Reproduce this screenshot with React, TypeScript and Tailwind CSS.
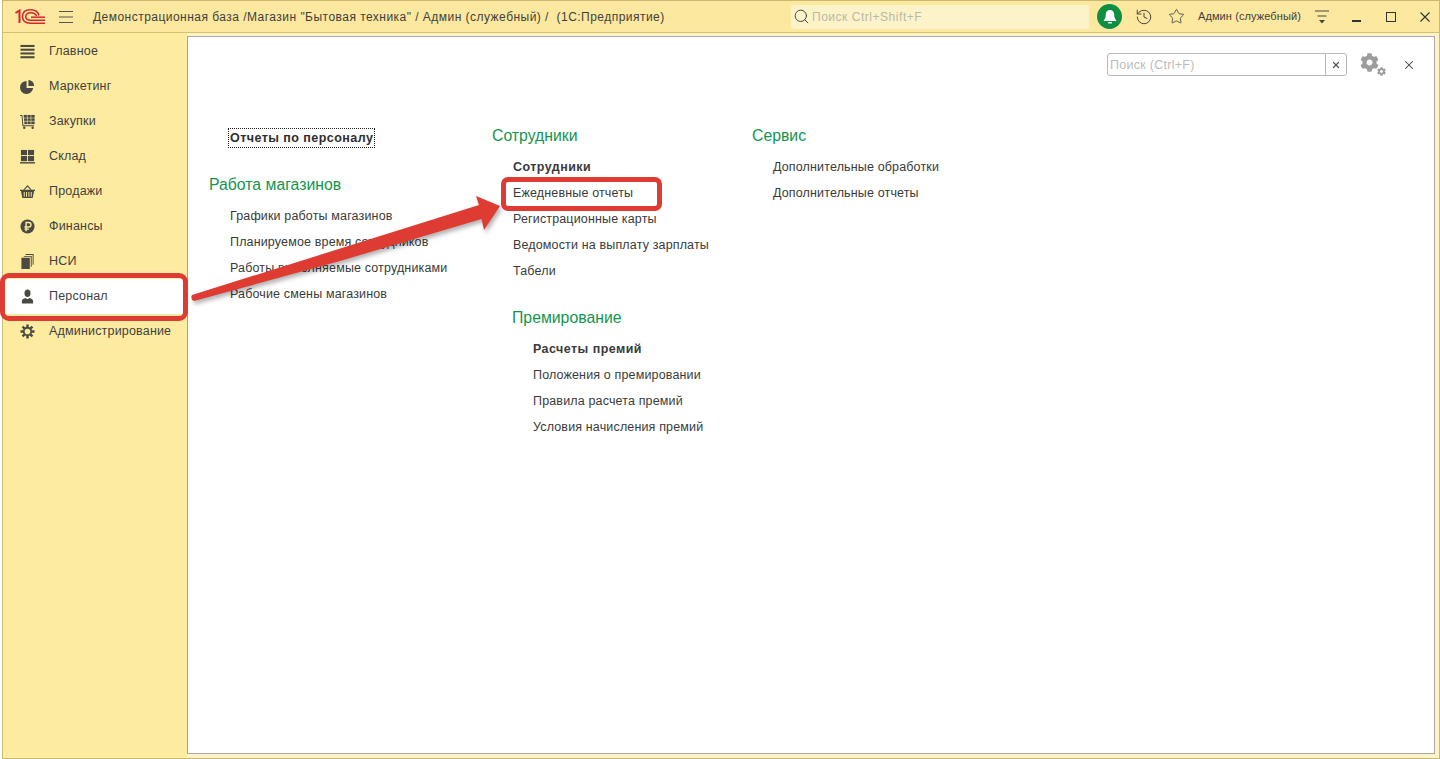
import { History, Search, Star, X } from "lucide-react";
import { FaCog } from "react-icons/fa";
import type { ReactNode } from "react";

const font = "font-['Liberation_Sans',Arial,sans-serif]";

const Logo = () => (
  <svg width="30" height="15" viewBox="0 0 30 15" fill="none" stroke="#d6262b">
    <path d="M0.5 4 L4.5 1.5 V14" strokeWidth="2" />
    <path d="M24 6.5 C23 2.5 20 0.8 15.5 0.8 C10 0.8 7.5 3.5 7.5 7.5 C7.5 11.5 10 14.2 15.5 14.2 H30" strokeWidth="1.5" />
    <path d="M21.5 7 C20.5 4.8 19 3.8 16 3.8 C12.5 3.8 10.7 5.2 10.7 7.5 C10.7 9.8 12.5 11.2 16 11.2 H30" strokeWidth="1.5" />
    <path d="M16 8.2 H30" strokeWidth="1.5" />
  </svg>
);

const iconCls = "w-[15px] h-[15px] shrink-0 text-[#4a4a42]";

const HomeIcon = () => (
  <svg viewBox="0 0 16 16" className={iconCls} fill="currentColor">
    <rect x="0.5" y="1" width="15" height="2.2" />
    <rect x="0.5" y="5" width="15" height="2.2" />
    <rect x="0.5" y="9" width="15" height="2.2" />
    <rect x="0.5" y="13" width="15" height="2.2" />
  </svg>
);
const PieIcon = () => (
  <svg viewBox="0 0 16 16" className={iconCls} fill="currentColor">
    <path d="M7 2 A7 7 0 1 0 14 9.5 H7 Z" />
    <path d="M9 1 A6 6 0 0 1 15 7.5 H9 Z" />
  </svg>
);
const CartIcon = () => (
  <svg viewBox="0 0 16 16" className={iconCls} fill="currentColor">
    <path d="M0 1 H2.6 L3.6 12 H15 V13 H2.6 L1.7 2 H0 Z" />
    <rect x="4" y="1" width="3.4" height="3" />
    <rect x="8" y="1" width="3.4" height="3" />
    <rect x="12" y="1" width="3.6" height="3" />
    <rect x="4.3" y="4.6" width="3.1" height="2.7" />
    <rect x="8" y="4.6" width="3.4" height="2.7" />
    <rect x="12" y="4.6" width="3.6" height="2.7" />
    <rect x="4.6" y="8" width="2.8" height="2.8" />
    <rect x="8" y="8" width="3.4" height="2.8" />
    <rect x="12" y="8" width="3.6" height="2.8" />
    <circle cx="4.5" cy="14.7" r="1.3" />
    <circle cx="13.5" cy="14.7" r="1.3" />
  </svg>
);
const StockIcon = () => (
  <svg viewBox="0 0 16 16" className={iconCls} fill="currentColor">
    <rect x="1" y="1" width="6.5" height="5.5" />
    <rect x="8.5" y="1" width="6.5" height="5.5" />
    <rect x="1" y="7.5" width="6.5" height="5.5" />
    <rect x="8.5" y="7.5" width="6.5" height="5.5" />
    <rect x="0" y="14" width="16" height="1.5" />
  </svg>
);
const BasketIcon = () => (
  <svg viewBox="0 0 16 16" className={iconCls} fill="currentColor">
    <path d="M8 1 L3.5 6 H5 L8 2.8 L11 6 H12.5 Z" />
    <path d="M0 6 H16 V7.5 H15 L13.5 15 H2.5 L1 7.5 H0 Z M4 8.5 V13.5 H5 V8.5 Z M6.5 8.5 V13.5 H7.5 V8.5 Z M9 8.5 V13.5 H10 V8.5 Z M11.5 8.5 V13.5 H12.5 V8.5 Z" fillRule="evenodd" />
  </svg>
);
const RubleIcon = () => (
  <svg viewBox="0 0 16 16" className={iconCls}>
    <circle cx="8" cy="8" r="7.5" fill="currentColor" />
    <path d="M6.5 13 V3.8 H9.3 A2.4 2.4 0 0 1 9.3 8.6 H4.8 M4.8 10.8 H9.5" fill="none" stroke="#fdeba3" strokeWidth="1.5" />
  </svg>
);
const BooksIcon = () => (
  <svg viewBox="0 0 16 16" className={iconCls} fill="currentColor">
    <rect x="1.5" y="4" width="9" height="12" />
    <path d="M4 2 H12.5 V13.5 H11.5 V3 H4 Z" />
    <path d="M6 0 H14.5 V11.5 H13.5 V1 H6 Z" />
  </svg>
);
const PersonIcon = () => (
  <svg viewBox="0 0 16 16" className={iconCls} fill="currentColor">
    <ellipse cx="8" cy="4.5" rx="3.2" ry="4" />
    <path d="M2 15.5 V13 C2 10.8 4 10 6 9.5 L8 11 L10 9.5 C12 10 14 10.8 14 13 V15.5 Z" />
  </svg>
);
const GearIcon = () => (
  <svg viewBox="0 0 16 16" className={iconCls} fill="none" stroke="currentColor">
    <circle cx="8" cy="8" r="4" strokeWidth="2" />
    <path d="M8 0.5 V3.5 M8 12.5 V15.5 M0.5 8 H3.5 M12.5 8 H15.5 M2.7 2.7 L4.8 4.8 M11.2 11.2 L13.3 13.3 M13.3 2.7 L11.2 4.8 M4.8 11.2 L2.7 13.3" strokeWidth="2.6" />
  </svg>
);

const menu: { label: string; icon: ReactNode; active?: boolean }[] = [
  { label: "Главное", icon: <HomeIcon /> },
  { label: "Маркетинг", icon: <PieIcon /> },
  { label: "Закупки", icon: <CartIcon /> },
  { label: "Склад", icon: <StockIcon /> },
  { label: "Продажи", icon: <BasketIcon /> },
  { label: "Финансы", icon: <RubleIcon /> },
  { label: "НСИ", icon: <BooksIcon /> },
  { label: "Персонал", icon: <PersonIcon />, active: true },
  { label: "Администрирование", icon: <GearIcon /> },
];

const Item = ({ children, bold }: { children: ReactNode; bold?: boolean }) => (
  <div className={`h-[26px] flex items-center whitespace-nowrap text-[12.5px] text-[#3a3a3a] ${bold ? "font-bold tracking-[0.45px]" : "tracking-[0.15px]"}`}>
    {children}
  </div>
);

const Heading = ({ children }: { children: ReactNode }) => (
  <div className="h-[24px] flex items-center whitespace-nowrap text-[15.8px] text-[#14954f]">{children}</div>
);

export default function App() {
  return (
    <div className={`${font} relative w-[1440px] h-[759px] overflow-hidden bg-white pl-[2px]`}>
      <div className="w-[1438px] h-[759px] bg-[#fdf3c6] border border-[#c9ba72] flex flex-col">
        <div className="h-[32px] shrink-0 flex items-center bg-[#fce89e] border-b border-[#d3c071] pl-[12px]">
          <Logo />
          <svg width="14" height="12" viewBox="0 0 14 12" className="ml-[14px] text-[#555]" stroke="currentColor">
            <path d="M0 0.5 H14 M0 6 H14 M0 11.5 H14" />
          </svg>
          <div className="ml-[20px] w-[698px] whitespace-pre text-[12px] tracking-[0.47px] text-[#3f3f3f]">
            Демонстрационная база /Магазин "Бытовая техника" / Админ (служебный) /  (1С:Предприятие)
          </div>
          <div className="w-[298px] h-[24px] bg-[#fdf3c8] rounded-[2px] flex items-center pl-[2px]">
            <Search className="w-[17px] h-[17px] text-[#444]" strokeWidth={1.4} />
            <span className="ml-[2px] text-[12px] tracking-[0.53px] text-[#b9b9a6]">Поиск Ctrl+Shift+F</span>
          </div>
          <div className="ml-[8px] w-[25px] h-[25px] rounded-full bg-[#0e8f43] flex items-center justify-center">
            <svg viewBox="0 0 16 16" className="w-[16px] h-[16px]" fill="#fff">
              <path d="M8 1 C5 1 3.8 3.5 3.8 6 C3.8 9 2.5 10.5 1.5 12 H14.5 C13.5 10.5 12.2 9 12.2 6 C12.2 3.5 11 1 8 1 Z" />
              <rect x="6" y="13" width="4" height="1.6" rx="0.8" />
            </svg>
          </div>
          <History className="ml-[13px] w-[18px] h-[18px] text-[#444]" strokeWidth={1.3} />
          <Star className="ml-[15px] w-[17px] h-[17px] text-[#444]" strokeWidth={1.2} />
          <span className="ml-[13px] w-[117px] whitespace-nowrap text-[11px] tracking-[0.1px] text-[#3f3f3f]">Админ (служебный)</span>
          <svg width="14" height="14" viewBox="0 0 14 14" className="text-[#444]" fill="currentColor">
            <rect x="0" y="0.5" width="14" height="1" />
            <rect x="2.5" y="5.5" width="9" height="1" />
            <path d="M4 10 H10 L7 13.5 Z" />
          </svg>
          <div className="ml-[23px] mt-[9px] w-[9px] h-[2px] bg-[#333]" />
          <div className="ml-[25px] w-[10px] h-[10px] border-[1.5px] border-[#333]" />
          <svg width="10" height="10" viewBox="0 0 10 10" className="ml-[24px] text-[#333]" stroke="currentColor" strokeWidth="1.1">
            <path d="M0.5 0.5 L9.5 9.5 M9.5 0.5 L0.5 9.5" />
          </svg>
        </div>

        <div className="flex-1 flex min-h-0">
          <aside className="w-[184px] shrink-0 bg-[#fdeba0] pt-[1px]">
            {menu.map((m) => (
              <div key={m.label} className={`relative h-[35px] flex items-center pl-[17px] ${m.active ? "bg-white" : ""}`}>
                {m.icon}
                <span className="ml-[14px] whitespace-nowrap text-[12.5px] tracking-[0.18px] text-[#3f3f3f]">{m.label}</span>
                {m.active && (
                  <div className="absolute left-[-3px] top-[-6px] w-[188px] h-[48px] border-[5px] border-[#de3b32] rounded-[9px]" />
                )}
              </div>
            ))}
          </aside>

          <div className="flex-1 pt-[3px] pr-[4px] pb-[4px] min-w-0 flex">
            <main className="flex-1 bg-white border border-[#a9a9a9] border-l-[#a8a48a] flex flex-col">
              <div className="h-[23px] mt-[16px] flex items-center justify-end">
                <div className="w-[240px] h-[23px] bg-white border border-[#b8b8b8] rounded-[3px] flex items-center">
                  <span className="flex-1 pl-[2px] pt-[2px] text-[12.5px] tracking-[0.28px] text-[#bcbcbc]">Поиск (Ctrl+F)</span>
                  <div className="w-[21px] h-full border-l border-[#b8b8b8] flex items-center justify-center">
                    <X className="w-[10px] h-[10px] text-[#555]" strokeWidth={3} />
                  </div>
                </div>
                <div className="relative ml-[13px] w-[27px] h-[23px] text-[#9c9c9c]">
                  <FaCog className="w-[19px] h-[19px]" />
                  <FaCog className="absolute right-[1px] bottom-0 w-[9px] h-[9px]" />
                </div>
                <X className="ml-[15px] mr-[18px] w-[14px] h-[14px] text-[#444]" strokeWidth={1.8} />
              </div>

              <div className="flex pl-[21px] mt-[48px]">
                <div className="w-[283px] pt-[4px]">
                  <div className="pl-[21px] mb-[25px]">
                    <div className="h-[20px] -ml-[2px] w-fit px-[1px] flex items-center font-bold whitespace-nowrap text-[12.5px] tracking-[0.45px] text-[#2e2e2e] border border-dotted border-[#222]">
                      Отчеты по персоналу
                    </div>
                  </div>
                  <Heading>Работа магазинов</Heading>
                  <div className="pl-[21px] mt-[6px]">
                    <Item>Графики работы магазинов</Item>
                    <Item>Планируемое время сотрудников</Item>
                    <Item>Работы выполняемые сотрудниками</Item>
                    <Item>Рабочие смены магазинов</Item>
                  </div>
                </div>

                <div className="w-[260px]">
                  <Heading>Сотрудники</Heading>
                  <div className="pl-[21px] mt-[6px]">
                    <Item bold>Сотрудники</Item>
                    <div className="relative">
                      <Item>Ежедневные отчеты</Item>
                      <div className="absolute left-[-12px] top-[-3px] w-[161px] h-[34px] border-[5px] border-[#de3b32] rounded-[7px]" />
                    </div>
                    <Item>Регистрационные карты</Item>
                    <Item>Ведомости на выплату зарплаты</Item>
                    <Item>Табели</Item>
                    <div className="mt-[22px] -ml-[1px]">
                      <Heading>Премирование</Heading>
                    </div>
                    <div className="pl-[20px] mt-[6px]">
                      <Item bold>Расчеты премий</Item>
                      <Item>Положения о премировании</Item>
                      <Item>Правила расчета премий</Item>
                      <Item>Условия начисления премий</Item>
                    </div>
                  </div>
                </div>

                <div>
                  <Heading>Сервис</Heading>
                  <div className="pl-[21px] mt-[6px]">
                    <Item>Дополнительные обработки</Item>
                    <Item>Дополнительные отчеты</Item>
                  </div>
                </div>
              </div>
            </main>
          </div>
        </div>
      </div>

      <svg className="absolute left-0 top-0 pointer-events-none drop-shadow-[2px_3px_2px_rgba(0,0,0,0.3)]" width="1440" height="759" viewBox="0 0 1440 759">
        <path d="M192 295 L479 205 L476 196 L500 206 L484 230 L481.5 219 L340 261 L194 301 Q190 299 192 295 Z" fill="#de3b32" />
      </svg>
    </div>
  );
}
